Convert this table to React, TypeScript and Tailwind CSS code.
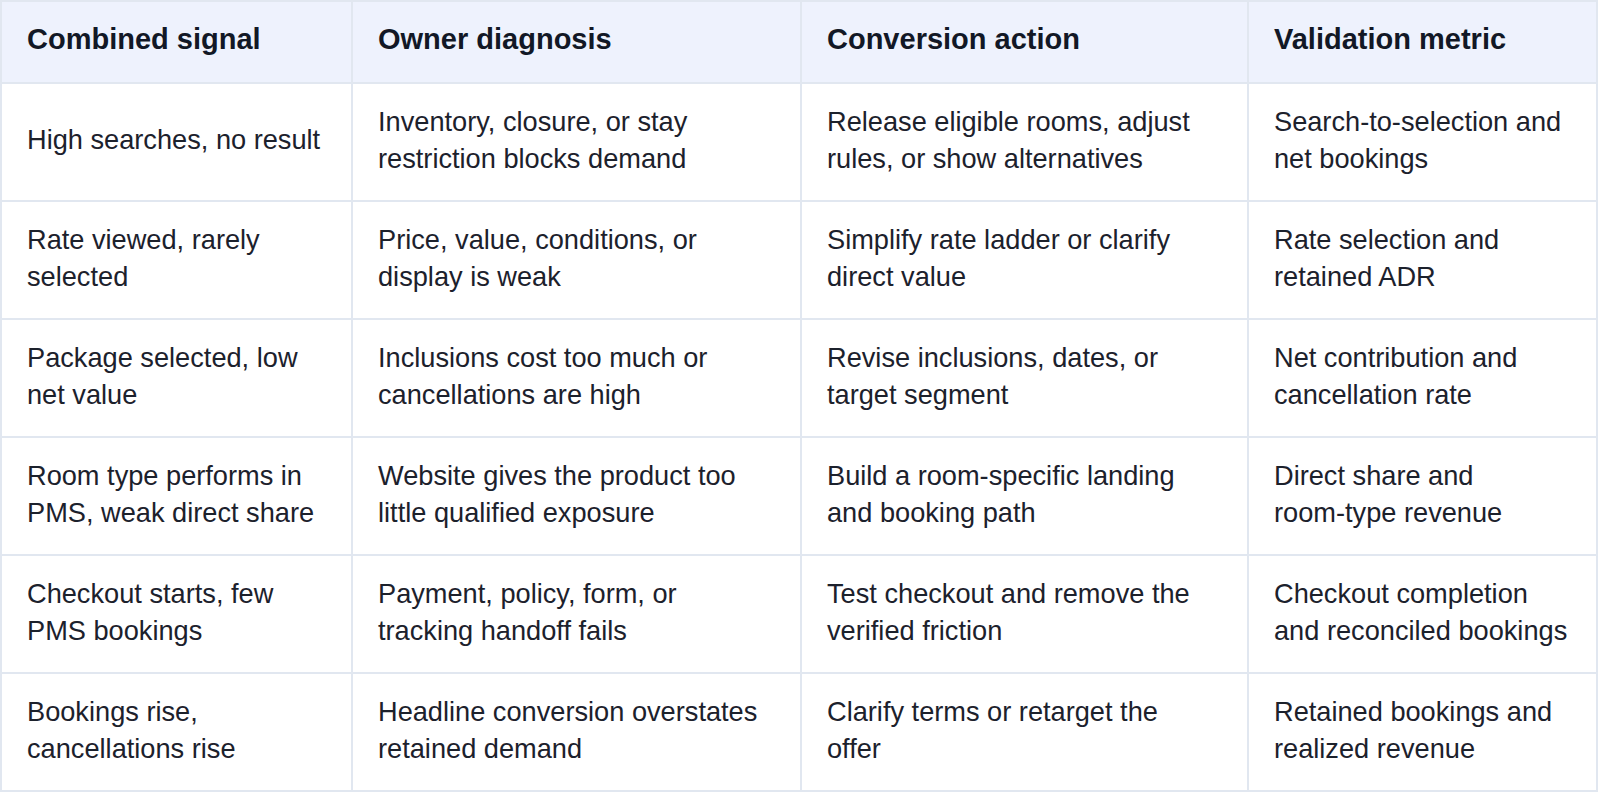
import React from "react";

const headers = [
  "Combined signal",
  "Owner diagnosis",
  "Conversion action",
  "Validation metric",
];

const rows: React.ReactNode[][] = [
  [
    "High searches, no result",
    "Inventory, closure, or stay restriction blocks demand",
    "Release eligible rooms, adjust rules, or show alternatives",
    "Search-to-selection and net bookings",
  ],
  [
    "Rate viewed, rarely selected",
    "Price, value, conditions, or display is weak",
    "Simplify rate ladder or clarify direct value",
    "Rate selection and retained ADR",
  ],
  [
    "Package selected, low net value",
    "Inclusions cost too much or cancellations are high",
    "Revise inclusions, dates, or target segment",
    "Net contribution and cancellation rate",
  ],
  [
    "Room type performs in PMS, weak direct share",
    "Website gives the product too little qualified exposure",
    "Build a room-specific landing and booking path",
    <>
      Direct share and <span className="whitespace-nowrap">room-type</span>{" "}
      revenue
    </>,
  ],
  [
    "Checkout starts, few PMS bookings",
    "Payment, policy, form, or tracking handoff fails",
    "Test checkout and remove the verified friction",
    "Checkout completion and reconciled bookings",
  ],
  [
    "Bookings rise, cancellations rise",
    "Headline conversion overstates retained demand",
    "Clarify terms or retarget the offer",
    "Retained bookings and realized revenue",
  ],
];

const widths = ["w-[351px]", "w-[449px]", "w-[447px]", "w-[349px]"];
const rightPad = ["pr-[20px]", "pr-[32px]", "pr-[40px]", "pr-[20px]"];

export default function App() {
  return (
    <div className="w-[1600px] h-[792px] bg-white font-['Liberation_Sans',Arial,sans-serif]">
      <table className="w-[1596px] table-fixed border-collapse border-2 border-[#e1e7f0]">
        <colgroup>
          {widths.map((w, i) => (
            <col key={i} className={w} />
          ))}
        </colgroup>
        <thead>
          <tr className="h-[82px] bg-[#eef2fd]">
            {headers.map((h) => (
              <th
                key={h}
                className="border-2 border-[#e1e7f0] pl-[25px] pr-[20px] pb-[5px] text-left align-middle text-[29px] font-bold leading-[37px] text-[#121826]"
              >
                {h}
              </th>
            ))}
          </tr>
        </thead>
        <tbody>
          {rows.map((r, i) => (
            <tr key={i} className="h-[118px]">
              {r.map((c, j) => (
                <td
                  key={j}
                  className={
                    "border-2 border-[#e1e7f0] pl-[25px] pb-[5px] align-middle text-[27.2px] leading-[37px] text-[#1c212c] " +
                    rightPad[j]
                  }
                >
                  {c}
                </td>
              ))}
            </tr>
          ))}
        </tbody>
      </table>
    </div>
  );
}
